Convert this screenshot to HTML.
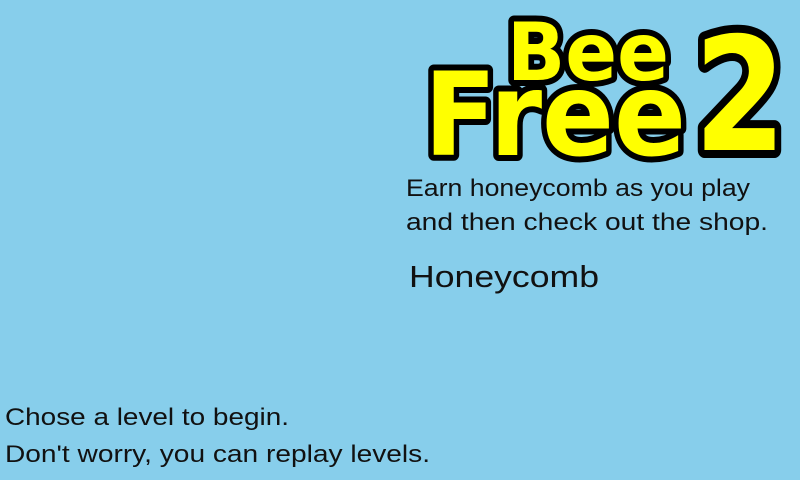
<!DOCTYPE html>
<html><head><style>
html,body{margin:0;padding:0;width:800px;height:480px;overflow:hidden;background:#87ceeb;}
</style></head><body>
<svg width="800" height="480" xmlns="http://www.w3.org/2000/svg" style="position:absolute;left:0;top:0">
<rect width="800" height="480" fill="#87ceeb"/>
<g font-family="DejaVu Sans, Liberation Sans, sans-serif" font-weight="bold" fill="#ffff00" stroke="#000" stroke-width="12" stroke-linejoin="round" paint-order="stroke">
<text x="507" y="80" font-size="80" textLength="162" lengthAdjust="spacingAndGlyphs">Bee</text>
<text x="424" y="155" font-size="116" textLength="262" lengthAdjust="spacingAndGlyphs">Free</text>
<text x="694" y="150" font-size="158" stroke-width="16" textLength="92" lengthAdjust="spacingAndGlyphs">2</text>
</g>
<g font-family="Liberation Sans, sans-serif" fill="#111">
<text x="406" y="196" font-size="24" textLength="344" lengthAdjust="spacingAndGlyphs">Earn honeycomb as you play</text>
<text x="406" y="230" font-size="24" textLength="362" lengthAdjust="spacingAndGlyphs">and then check out the shop.</text>
<text x="409" y="287" font-size="31" textLength="190" lengthAdjust="spacingAndGlyphs">Honeycomb</text>
<text x="5" y="425" font-size="24" textLength="284" lengthAdjust="spacingAndGlyphs">Chose a level to begin.</text>
<text x="5" y="462" font-size="24" textLength="425" lengthAdjust="spacingAndGlyphs">Don't worry, you can replay levels.</text>
</g>
</svg>
</body></html>
